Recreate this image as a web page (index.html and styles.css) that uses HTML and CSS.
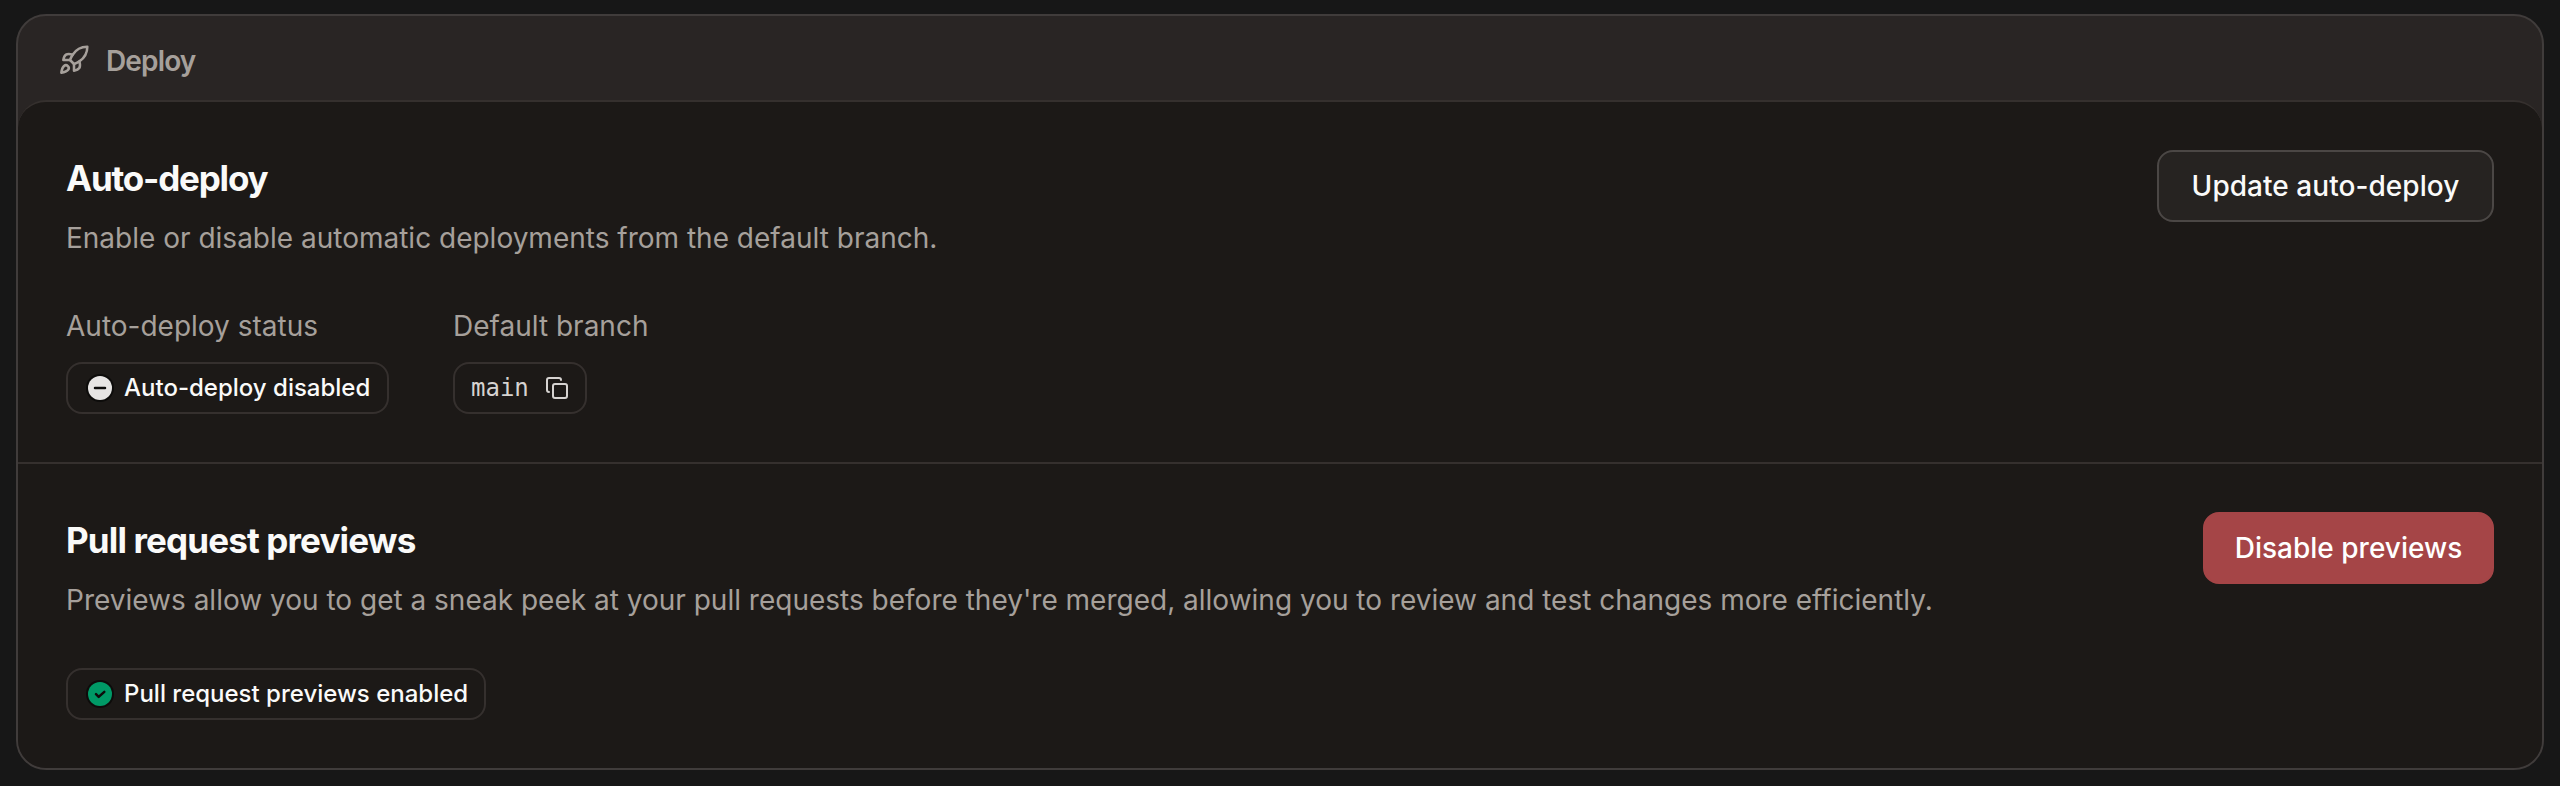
FILE: index.html
```html
<!DOCTYPE html>
<html lang="en">
<head>
<meta charset="utf-8">
<title>Deploy</title>
<link rel="stylesheet" href="styles.css">
</head>
<body>
<main class="card">
  <header class="card-header">
    <svg class="rocket" viewBox="0 0 24 24" fill="none" stroke="currentColor" stroke-width="1.9" stroke-linecap="round" stroke-linejoin="round"><path d="M4.500 16.500c-1.500 1.260-2 5-2 5s3.740-.5 5-2c.71-.84.7-2.130-.09-2.910a2.180 2.180 0 0 0-2.910-.09z"/><path d="m12 15-3-3a22 22 0 0 1 2-3.950A12.880 12.880 0 0 1 22 2c0 2.720-.78 7.500-6 11a22.350 22.350 0 0 1-4 2z"/><path d="M9 12H4s.55-3.030 2-4c1.620-1.080 5 0 5 0"/><path d="M12 15v5s3.030-.55 4-2c1.080-1.620 0-5 0-5"/></svg>
    <h1 class="card-title">Deploy</h1>
  </header>
  <div class="panel">
    <section class="section">
      <div class="section-head">
        <div class="intro">
          <h2 class="title title-auto">Auto-deploy</h2>
          <p class="desc">Enable or disable automatic deployments from the default branch.</p>
        </div>
        <button class="btn btn-secondary">Update auto-deploy</button>
      </div>
      <div class="fields">
        <div class="field">
          <span class="label">Auto-deploy status</span>
          <span class="badge badge-disabled"><svg class="dot" viewBox="0 0 28 28"><circle cx="14" cy="14" r="14" fill="#0d0c0b"/><circle cx="14" cy="14" r="12" fill="#e7e5e4"/><path d="M9 14h10" stroke="#0d0c0b" stroke-width="2.500" stroke-linecap="round"/></svg><span class="badge-text">Auto-deploy disabled</span></span>
        </div>
        <div class="field">
          <span class="label">Default branch</span>
          <span class="badge badge-branch"><span class="mono">main</span><svg class="copy" viewBox="0 0 24 24" fill="none" stroke="currentColor" stroke-width="2" stroke-linecap="round" stroke-linejoin="round"><rect x="8" y="8" width="14" height="14" rx="2"/><path d="M4 16c-1.100 0-2-.9-2-2V4c0-1.100.9-2 2-2h10c1.100 0 2 .9 2 2"/></svg></span>
        </div>
      </div>
    </section>
    <section class="section">
      <div class="section-head">
        <div class="intro">
          <h2 class="title">Pull request previews</h2>
          <p class="desc">Previews allow you to get a sneak peek at your pull requests before they're merged, allowing you to review and test changes more efficiently.</p>
        </div>
        <button class="btn btn-danger">Disable previews</button>
      </div>
      <div class="status">
        <span class="badge badge-enabled"><svg class="dot" viewBox="0 0 28 28"><circle cx="14" cy="14" r="14" fill="#0d0c0b"/><circle cx="14" cy="14" r="12" fill="#009966"/><path d="M10 14.200l2.700 2.700 5.600-5.100" fill="none" stroke="#0d0c0b" stroke-width="2.500" stroke-linecap="round" stroke-linejoin="round"/></svg><span class="badge-text">Pull request previews enabled</span></span>
      </div>
    </section>
  </div>
</main>
</body>
</html>
```
FILE: styles.css
```css
* { box-sizing: border-box; margin: 0; }
body {
  height: 786px;
  padding: 14px 16px 16px;
  background: #171717;
  font-family: Inter, "Liberation Sans", sans-serif;
  font-size: 28px;
  overflow: hidden;
}
.card {
  height: 756px;
  border: 2px solid #403c3b;
  border-radius: 30px;
  background: #292524;
  overflow: hidden;
  display: flex;
  flex-direction: column;
}
.card-header {
  height: 84px;
  flex: none;
  padding: 3px 40px 0;
  display: flex;
  align-items: center;
  gap: 16px;
  color: #a6a09b;
}
.rocket { width: 32px; height: 32px; }
.card-title { padding-top: 3px; font-size: 28px; line-height: 36px; font-weight: 600; letter-spacing: -0.85px; }
.panel {
  flex: 1;
  border-top: 2px solid #35302e;
  border-radius: 28px 28px 0 0;
  background: #1c1917;
}
.section { padding: 48px; }
.section:first-child { height: 362px; border-bottom: 2px solid #35302e; }
.section-head { display: flex; justify-content: space-between; align-items: flex-start; }
.title { font-size: 35px; line-height: 56px; font-weight: 650; letter-spacing: -0.85px; color: #fafaf9; white-space: nowrap; }
.title-auto { letter-spacing: -1.2px; }
.desc { margin-top: 12px; line-height: 40px; color: #a6a09b; white-space: nowrap; }
.btn {
  height: 72px;
  border-radius: 16px;
  border: 2px solid #4b4745;
  font: 500 28px Inter, "Liberation Sans", sans-serif;
  color: #fafaf9;
  white-space: nowrap;
  padding: 0;
}
.btn-secondary { width: 337px; background: #262321; letter-spacing: 0.05px; }
.btn-danger { width: 291px; background: #a54547; border-color: #a54547; color: #fff; }
.fields { display: flex; gap: 64px; margin-top: 48px; }
.field { display: flex; flex-direction: column; align-items: flex-start; gap: 16px; }
.label { line-height: 40px; color: #a6a09b; white-space: nowrap; }
.badge {
  display: flex;
  align-items: center;
  height: 52px;
  border: 2px solid #35302e;
  border-radius: 16px;
  padding-left: 18px;
  font-size: 24px;
  font-weight: 500;
  color: #fafaf9;
  white-space: nowrap;
}
.badge-text { padding-bottom: 2px; }
.badge-disabled { width: 323px; }
.badge-enabled { width: 420px; }
.badge-branch { width: 134px; padding-left: 16px; gap: 16px; }
.dot { width: 28px; height: 28px; margin-right: 10px; flex: none; }
.mono { font: 24px "DejaVu Sans Mono", monospace; color: #d6d3d1; }
.copy { width: 24px; height: 24px; flex: none; color: #d6d3d1; }
.status { margin-top: 48px; }
```
